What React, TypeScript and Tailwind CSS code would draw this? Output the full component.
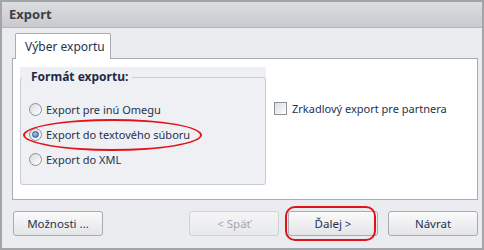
import React from "react";

const font = { fontFamily: '"Noto Sans", "Open Sans", sans-serif' };

function Radio({ checked, label }: { checked?: boolean; label: string }) {
  return (
    <div className="flex items-center h-[25px]">
      <div className="w-[13px] h-[13px] rounded-full border border-[#8d9096] bg-gradient-to-br from-[#d8dadd] to-[#ffffff] flex items-center justify-center">
        {checked && (
          <div className="w-[7px] h-[7px] rounded-full bg-[radial-gradient(circle_at_40%_35%,#a9c6f0,#3a6dc0)] border border-[#2f5aa5]" />
        )}
      </div>
      <span className="ml-[4px] text-[11px] text-[#253250] leading-none">{label}</span>
    </div>
  );
}

function Btn({ label, disabled, className = "" }: { label: string; disabled?: boolean; className?: string }) {
  return (
    <div
      className={`h-[25px] w-[90px] rounded-[3px] border flex items-center justify-center text-[11.5px] ${
        disabled
          ? "border-[#cfd1d5] bg-gradient-to-b from-[#f5f5f6] to-[#e8e9eb] text-[#a3a6ad]"
          : "border-[#a8abb0] bg-gradient-to-b from-[#fafafa] to-[#e4e5e8] text-[#253250]"
      } ${className}`}
    >
      {label}
    </div>
  );
}

export default function App() {
  return (
    <div style={font} className="w-[484px] h-[250px] border-2 border-[#a3a4a7] flex flex-col bg-[#ebecef] overflow-hidden">
      <div className="h-[26px] border-b border-[#b4b5b9] bg-gradient-to-b from-[#dcdde1] to-[#c9cacf] flex items-center pl-[7px]">
        <span className="text-[13px] font-bold text-[#3c3e44]">Export</span>
      </div>
      <div className="flex-1 flex flex-col pl-[10px] pr-[4px] pt-[5px]">
        <div className="flex">
          <div className="ml-[3px] h-[26px] w-[96px] bg-white border border-b-0 border-[#a9abb0] rounded-t-[2px] flex items-center pl-[9px] text-[12px] text-[#253250] relative z-10">
            Výber exportu
          </div>
        </div>
        <div className="h-[142px] -mt-px bg-white border border-[#a9abb0] flex pl-[7px] pt-[8px] relative">
          <div className="w-[246px] h-[118px] bg-[#eef0f3] flex flex-col px-[2px] relative">
            <div className="flex items-center h-[20px]">
              <span className="pl-[9px] pr-[4px] text-[12px] font-bold text-[#1f2a47] bg-[#eef0f3] relative z-10">Formát exportu:</span>
            </div>
            <div className="absolute left-0 right-0 top-[10px] bottom-0 border border-[#c9ccd2] rounded-[3px]" />
            <div className="flex flex-col pl-[7px] pt-[10px] relative">
              <Radio label="Export pre inú Omegu" />
              <Radio checked label="Export do textového súboru" />
              <Radio label="Export do XML" />
            </div>
          </div>
          <div className="ml-[8px] pt-[34px]">
            <div className="flex items-center h-[14px]">
              <div className="w-[13px] h-[13px] border border-[#8d9096] bg-gradient-to-br from-[#dcdee2] to-[#ffffff]" />
              <span className="ml-[5px] text-[11px] text-[#253250] leading-none">Zrkadlový export pre partnera</span>
            </div>
          </div>
          <div className="absolute left-[10px] top-[60px] w-[179px] h-[32px] rounded-[50%] border-2 border-[#e3121a]" />
        </div>
        <div className="flex items-center mt-[11px]">
          <Btn label="Možnosti ..." className="ml-px" />
          <div className="flex-1" />
          <Btn label="< Späť" disabled />
          <div className="relative ml-[9px]">
            <Btn label="Ďalej >" className="w-[85px]" />
            <div className="absolute -left-[3px] -top-[5px] w-[91px] h-[35px] rounded-[10px] border-2 border-[#e3121a]" />
          </div>
          <Btn label="Návrat" className="ml-[10px]" />
        </div>
      </div>
    </div>
  );
}
